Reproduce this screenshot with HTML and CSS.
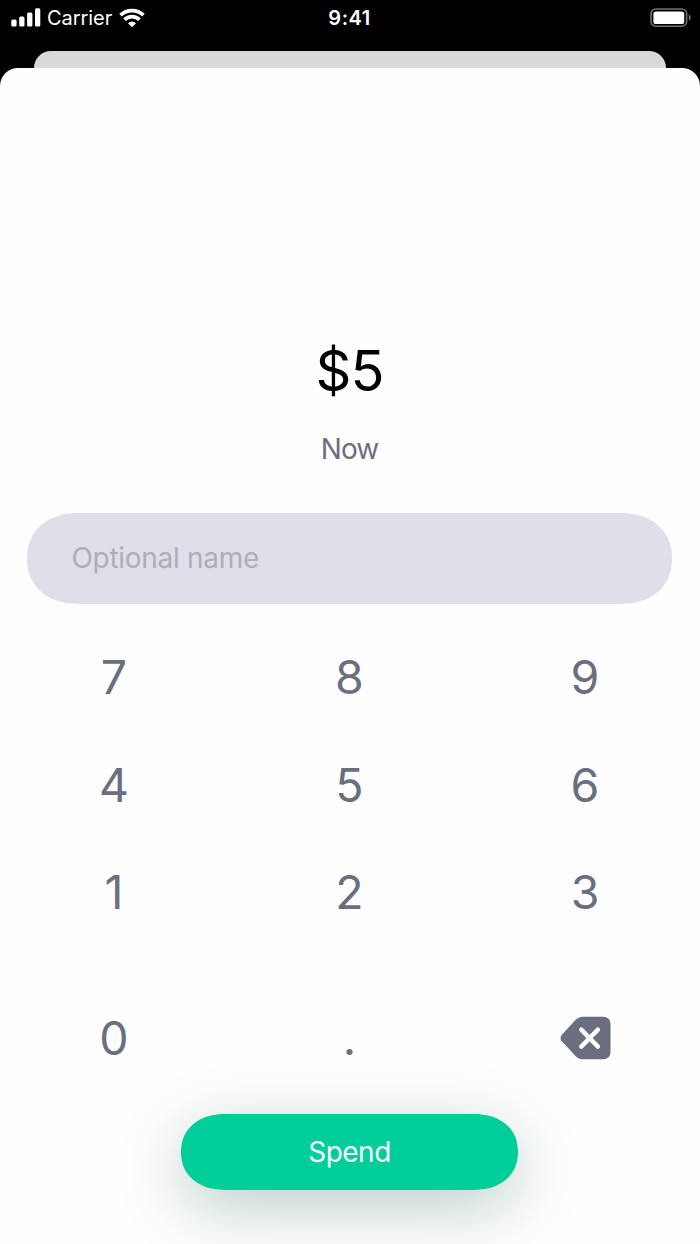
FILE: index.html
```html
<!DOCTYPE html>
<html lang="en">
<head>
<meta charset="utf-8">
<title>Spend</title>
<link rel="stylesheet" href="styles.css">
</head>
<body>
<div class="screen">
  <header class="status">
    <div class="status-left">
      <svg class="signal" width="30" height="19" viewBox="0 0 30 19" fill="#fff"><rect x="0.3" y="11.5" width="5.3" height="7" rx="1.5"/><rect x="8.2" y="8.4" width="5.3" height="10.1" rx="1.5"/><rect x="16.1" y="4.4" width="5.3" height="14.1" rx="1.5"/><rect x="24" y="0.3" width="5.3" height="18.2" rx="1.5"/></svg>
      <span class="carrier">Carrier</span>
      <svg class="wifi" width="26" height="20" viewBox="0 0 26 20" fill="none" stroke="#fff" stroke-width="3.7"><path d="M1.500 7.200a16.500 16.500 0 0 1 23 0M5.500 11.600a10.800 10.800 0 0 1 15 0"/><path d="M13 19.300l-4-4.100a5.700 5.700 0 0 1 8 0z" fill="#fff" stroke="none"/></svg>
    </div>
    <span class="time">9:41</span>
    <svg class="battery" width="42" height="20" viewBox="0 0 42 20"><rect x="1" y="1" width="35.6" height="17.2" rx="4.8" fill="none" stroke="#717171" stroke-width="1.6"/><rect x="3.4" y="3.4" width="30.8" height="12.6" rx="2.6" fill="#fff"/><path d="M38.8 6.6c2.6 1 2.6 5 0 6z" fill="#717171"/></svg>
  </header>
  <div class="back-card"></div>
  <main class="sheet">
    <div class="amount">$5</div>
    <div class="when">Now</div>
    <input class="name" type="text" placeholder="Optional name" aria-label="Optional name">
    <div class="keypad">
      <span class="key">7</span><span class="key">8</span><span class="key">9</span>
      <span class="key">4</span><span class="key">5</span><span class="key">6</span>
      <span class="key">1</span><span class="key">2</span><span class="key">3</span>
      <span class="key">0</span><span class="key">.</span>
      <span class="key"><svg class="delete" width="51" height="44" viewBox="0 0 51 44"><path d="M22.5.8H43Q50.5.8 50.5 8.300V35.700Q50.500 43.200 43 43.200H22.500Q18.800 43.200 16.200 40.700L2.300 25.800Q-1.300 22 2.300 18.200L16.200 3.300Q18.800.8 22.500.8Z" fill="#6b6e7e"/><path d="M21.300 13.600 37.900 30.600M37.900 13.600 21.300 30.600" stroke="#fff" stroke-width="4.400" stroke-linecap="round"/></svg></span>
    </div>
    <button class="spend">Spend</button>
  </main>
</div>
</body>
</html>
```

FILE: styles.css
```css
* { box-sizing: border-box; }

body {
  margin: 0;
  background: #000;
  font-family: Inter, "Liberation Sans", sans-serif;
}

.screen {
  display: flex;
  flex-direction: column;
  height: 1244px;
  overflow: hidden;
}

.status {
  display: grid;
  grid-template-columns: 1fr auto 1fr;
  height: 51px;
  padding: 0 9px 16px 11px;
  align-items: center;
  color: #fff;
}

.status-left {
  display: flex;
  align-items: center;
}

.carrier {
  margin-left: 6px;
  font-size: 20px;
  line-height: 24px;
  letter-spacing: -0.05px;
}

.wifi { margin-left: 7px; }

.time {
  margin-right: 3px;
  font-size: 20px;
  font-weight: 600;
  letter-spacing: 0.5px;
}

.battery {
  justify-self: end;
  margin-right: -1px;
}

.back-card {
  height: 17px;
  margin: 0 34px;
  border-radius: 17px 17px 0 0;
  background: #d9d9d9;
}

.sheet {
  display: flex;
  flex: 1;
  flex-direction: column;
  align-items: center;
  padding: 268px 28px 0 27px;
  border-radius: 18px 18px 0 0;
  background: #fefefe;
}

.amount {
  height: 70px;
  font-size: 56px;
  line-height: 70px;
  letter-spacing: -1px;
}

.when {
  height: 34px;
  margin-top: 26px;
  color: #6b6e7e;
  font-size: 28px;
  line-height: 34px;
  letter-spacing: -0.9px;
}

.name {
  width: 100%;
  height: 91px;
  margin-top: 47px;
  padding: 0 44.500px 2px;
  border: 0;
  border-radius: 52px / 45.500px;
  corner-shape: superellipse(1.15);
  outline: 0;
  background: #dfdfea;
  font: inherit;
  font-size: 28px;
  letter-spacing: -0.3px;
}

.name::placeholder {
  color: #aeaeb9;
  opacity: 1;
}

.keypad {
  display: grid;
  grid-template-columns: repeat(3, 1fr);
  grid-template-rows: repeat(3, 107.500px) 184px;
  column-gap: 61.500px;
  width: 100%;
  margin-top: 19.500px;
}

.key {
  display: flex;
  align-items: center;
  justify-content: center;
  color: #6b6e7e;
  font-size: 46.500px;
  line-height: 56px;
}

.spend {
  width: 337px;
  height: 76px;
  margin-top: -16px;
  border: 0;
  border-radius: 45px / 38px;
  corner-shape: superellipse(1.15);
  background: #00ce9a;
  box-shadow: 0 17px 64px rgba(0, 80, 60, 0.27);
  color: #fff;
  font: inherit;
  font-size: 28px;
  letter-spacing: -0.5px;
}
```
